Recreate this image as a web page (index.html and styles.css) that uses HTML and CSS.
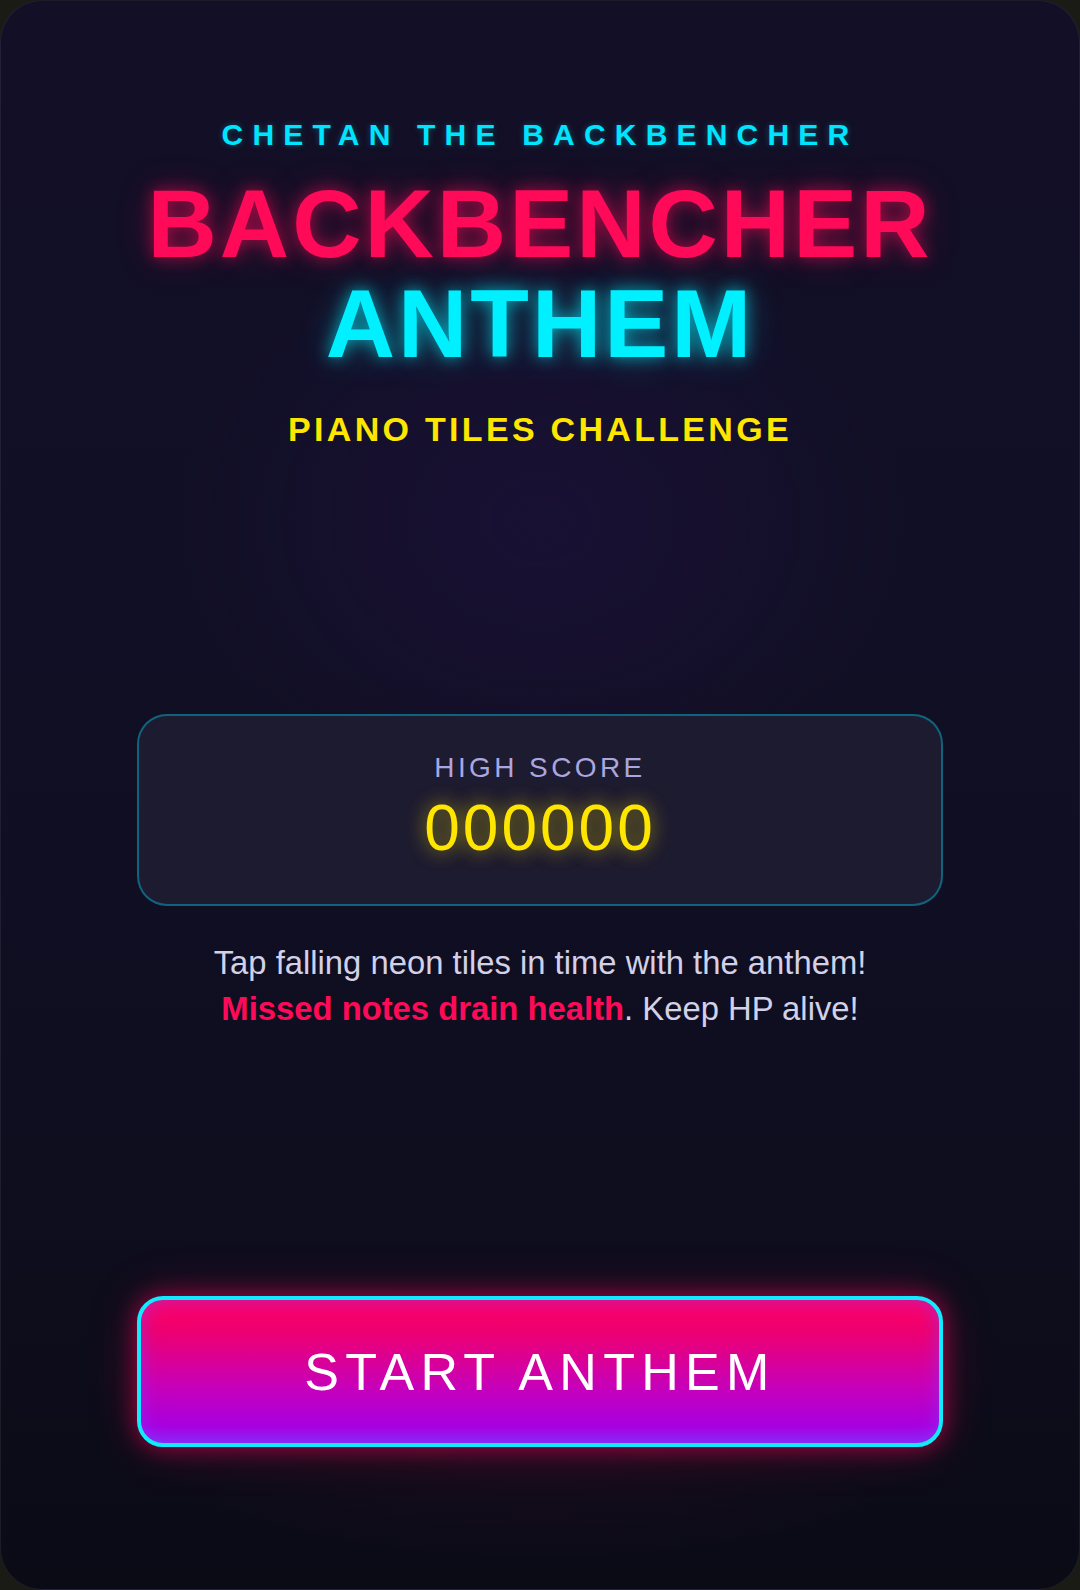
FILE: index.html
```html
<!DOCTYPE html>
<html lang="en">
<head>
<meta charset="utf-8">
<title>Backbencher Anthem</title>
<link rel="stylesheet" href="styles.css">
</head>
<body>
<main class="card">
  <header class="header">
    <div class="kicker">CHETAN THE BACKBENCHER</div>
    <h1 class="title">
      <span class="title-pink">BACKBENCHER</span>
      <span class="title-cyan">ANTHEM</span>
    </h1>
    <div class="subtitle">PIANO TILES CHALLENGE</div>
  </header>

  <section class="middle">
    <div class="score-box">
      <div class="score-label">HIGH SCORE</div>
      <div class="score-value">000000</div>
    </div>
    <p class="desc">Tap falling neon tiles in time with the anthem!<br><strong class="warn">Missed notes drain health</strong>. Keep HP alive!</p>
  </section>

  <button class="start-btn" type="button">START ANTHEM</button>
</main>
</body>
</html>
```

FILE: styles.css
```css
* { box-sizing: border-box; }

html, body {
  margin: 0;
  padding: 0;
  width: 1080px;
  height: 1590px;
  background: #1b1b16;
  font-family: "Liberation Sans", Arial, sans-serif;
  overflow: hidden;
}

.card {
  width: 1080px;
  height: 1590px;
  border-radius: 42px;
  border: 1px solid rgba(255, 255, 255, 0.07);
  background:
    radial-gradient(ellipse 520px 420px at 540px 520px, rgba(40, 20, 80, 0.35), rgba(40, 20, 80, 0) 70%),
    radial-gradient(ellipse 600px 200px at 540px 1420px, rgba(255, 0, 102, 0.06), rgba(255, 0, 102, 0) 70%),
    linear-gradient(180deg, #120f27 0%, #110f25 40%, #0f0e20 70%, #0b0b16 100%);
  display: flex;
  flex-direction: column;
  justify-content: space-between;
  align-items: center;
  padding: 116px 136px 142px;
  overflow: hidden;
}

.header {
  display: flex;
  flex-direction: column;
  align-items: center;
  text-align: center;
  width: 100%;
}

.kicker {
  font-size: 30px;
  line-height: 36px;
  font-weight: 700;
  letter-spacing: 9.2px;
  color: #00e5ff;
  text-shadow: 0 0 6px rgba(0, 229, 255, 0.3);
}

.title {
  margin: 21px 0 0;
  font-size: 96px;
  line-height: 100px;
  font-weight: 700;
  letter-spacing: 3px;
  display: flex;
  flex-direction: column;
  align-items: center;
}

.title-pink {
  color: #ff0a58;
  text-shadow: 0 0 16px rgba(255, 10, 88, 0.6), 0 0 36px rgba(255, 10, 88, 0.3);
}

.title-cyan {
  color: #00f0ff;
  text-shadow: 0 0 16px rgba(0, 240, 255, 0.65), 0 0 36px rgba(0, 240, 255, 0.3);
}

.subtitle {
  margin-top: 35px;
  font-size: 34px;
  line-height: 40px;
  font-weight: 700;
  letter-spacing: 3.3px;
  color: #ffe600;
}

.middle {
  width: 100%;
  display: flex;
  flex-direction: column;
  align-items: center;
}

.score-box {
  width: 100%;
  height: 192px;
  border: 2px solid rgba(0, 200, 230, 0.42);
  border-radius: 30px;
  background: #1d1b30;
  display: flex;
  flex-direction: column;
  align-items: center;
  padding-top: 35px;
}

.score-label {
  font-size: 28px;
  line-height: 34px;
  letter-spacing: 3.4px;
  color: #aba6df;
}

.score-value {
  margin-top: 7px;
  font-size: 64px;
  line-height: 72px;
  letter-spacing: 3px;
  color: #ffe600;
  text-shadow: 0 0 18px rgba(255, 230, 0, 0.55), 0 0 36px rgba(255, 230, 0, 0.2);
}

.desc {
  margin: 34px 0 0;
  font-size: 32.8px;
  line-height: 46px;
  color: #d2d1e8;
  text-align: center;
}

.warn {
  color: #ff0a58;
  font-weight: 700;
}

.start-btn {
  width: 100%;
  height: 151px;
  border: 4px solid #12eaff;
  border-radius: 26px;
  background: linear-gradient(180deg, #ff0066 0%, #ee0070 22%, #c800b8 60%, #a800e0 88%, #8f20f5 100%);
  box-shadow:
    0 0 22px rgba(255, 0, 90, 0.55),
    0 0 48px rgba(255, 0, 90, 0.25),
    inset 0 0 18px rgba(130, 60, 255, 0.55);
  color: #ffffff;
  font-family: "Liberation Sans", Arial, sans-serif;
  font-size: 52px;
  line-height: 60px;
  letter-spacing: 6.3px;
  padding: 0;
  cursor: pointer;
}
```
